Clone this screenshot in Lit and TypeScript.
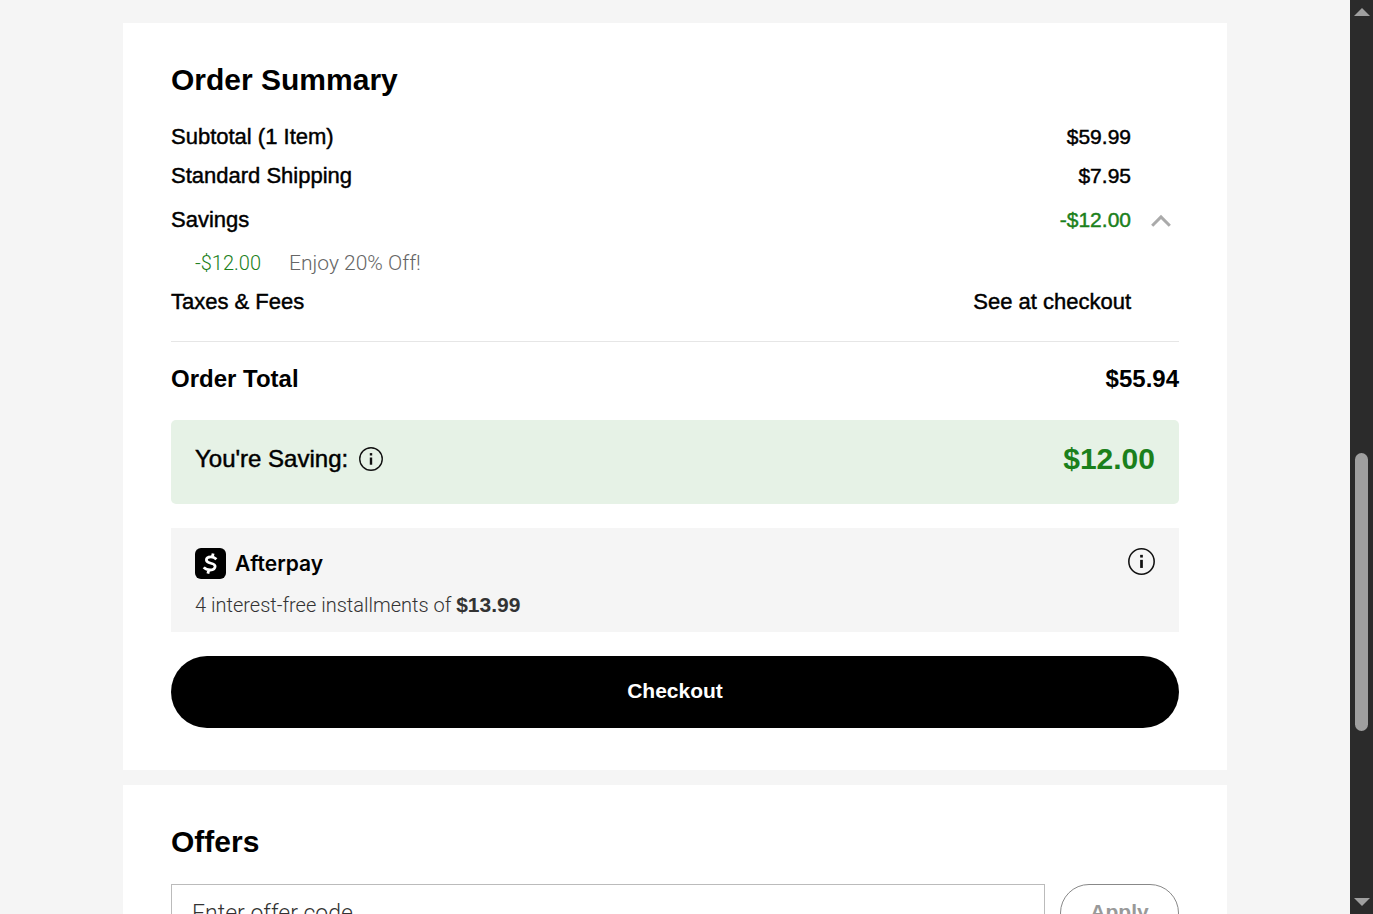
import { LitElement, html, css, svg } from "lit";
import { customElement, state } from "lit/decorators.js";

const infoGlyph = (size: number) => html`
  <svg width=${size} height=${size} viewBox="0 0 26 26" aria-hidden="true">
    ${svg`<circle cx="13" cy="13" r="12.2" fill="none" stroke="#111" stroke-width="1.5"/>
    <rect x="11.7" y="6.6" width="2.6" height="2.6" fill="#111"/>
    <rect x="11.7" y="11.4" width="2.6" height="7.8" fill="#111"/>`}
  </svg>
`;

@customElement("page-scrollbar")
class PageScrollbar extends LitElement {
  static styles = css`
    :host {
      display: flex;
      flex-direction: column;
      align-items: center;
      box-sizing: border-box;
      padding: 8px 0;
      background: #2b2b2b;
    }
    .arrow { display: block; }
    .before { flex: 437; }
    .thumb { flex: 278; width: 13px; border-radius: 7px; background: #9f9f9f; }
    .after { flex: 167; }
  `;
  render() {
    return html`
      <svg class="arrow" width="16" height="8" viewBox="0 0 16 8"><path d="M8 0 16 8H0Z" fill="#9f9f9f" /></svg>
      <div class="before"></div>
      <div class="thumb"></div>
      <div class="after"></div>
      <svg class="arrow" width="16" height="8" viewBox="0 0 16 8"><path d="M0 0H16L8 8Z" fill="#9f9f9f" /></svg>
    `;
  }
}

@customElement("app-root")
class AppRoot extends LitElement {
  @state() private open = true;

  static styles = css`
    :host {
      display: grid;
      grid-template-columns: minmax(0, 1fr) 23px;
      height: 100vh;
      overflow: hidden;
      background: #f5f5f5;
      color: #000;
      font-family: "Liberation Sans", Arial, sans-serif;
    }
    * { box-sizing: border-box; }
    button { font-family: inherit; cursor: pointer; }
    svg { display: block; flex: none; }
    .page {
      display: flex;
      flex-direction: column;
      align-items: center;
      gap: 15px;
      padding-top: 23px;
      min-height: 0;
      overflow: hidden;
    }
    .card {
      flex: none;
      width: 100%;
      max-width: 1104px;
      padding: 39px 48px 42px;
      background: #fff;
    }
    .title { margin: 0; font-size: 30px; line-height: 36px; font-weight: 700; }
    .lines { margin: 19px 0 0; padding-bottom: 20px; border-bottom: 1px solid #e6e6e6; }
    .line {
      display: grid;
      grid-template-columns: 1fr auto 48px;
      align-items: center;
      line-height: 39px;
      font-size: 22px;
      -webkit-text-stroke: 0.02em currentColor;
    }
    .line.tall { line-height: 50px; }
    .line dt, .line dd, .detail dt, .detail dd { margin: 0; }
    .amount { font-size: 21px; }
    .green { color: #1b801b; }
    .toggle { display: block; padding: 1px 0 0 20px; border: 0; background: none; }
    .toggle.closed svg { transform: rotate(180deg); }
    .detail {
      display: flex;
      gap: 28px;
      padding-left: 24px;
      font-size: 20px;
      line-height: 37px;
    }
    .light { font-family: Roboto, Inter, sans-serif; font-weight: 300; }
    .muted { color: #666; font-size: 21px; }
    .total {
      display: flex;
      justify-content: space-between;
      margin: 22px 0 26px;
      font-size: 24px;
      line-height: 30px;
      font-weight: 700;
    }
    .saving {
      display: flex;
      align-items: center;
      justify-content: space-between;
      padding: 24px 24px 30px;
      border-radius: 5px;
      background: #e6f2e6;
      line-height: 30px;
    }
    .saving-label {
      display: flex;
      align-items: center;
      gap: 11px;
      font-size: 24px;
      -webkit-text-stroke: 0.02em currentColor;
    }
    .saving-amount { font-size: 30px; font-weight: 700; }
    .icon-button { padding: 0; border: 0; background: none; }
    .afterpay { margin-top: 24px; padding: 20px 24px 12px; background: #f5f5f5; }
    .brand-row { display: flex; align-items: flex-start; justify-content: space-between; height: 31px; }
    .brand {
      display: flex;
      align-items: center;
      gap: 9px;
      font-family: Inter, sans-serif;
      font-size: 21px;
      font-weight: 600;
    }
    .terms { margin: 11px 0 0; font-size: 20px; line-height: 30px; color: #333; }
    .terms strong { font-family: "Liberation Sans", Arial, sans-serif; font-size: 21px; font-weight: 700; }
    .checkout {
      display: block;
      width: 100%;
      height: 72px;
      margin-top: 24px;
      padding: 0 0 3px;
      border: 0;
      border-radius: 36px;
      background: #000;
      color: #fff;
      font-size: 21px;
      font-weight: 700;
    }
    .offer { display: flex; gap: 15px; margin-top: 24px; }
    .code {
      flex: 1;
      min-width: 0;
      height: 58px;
      padding: 0 20px;
      border: 1px solid #bbb;
      border-radius: 0;
      background: #fff;
      font-size: 23px;
    }
    .code::placeholder { color: #333; opacity: 1; }
    .apply {
      width: 119px;
      height: 58px;
      padding: 0 0 2px;
      border: 1px solid #888;
      border-radius: 29px;
      background: #fff;
      color: #999;
      font-size: 21px;
      font-weight: 700;
    }
  `;

  render() {
    return html`
      <main class="page">
        <section class="card">
          <h2 class="title">Order Summary</h2>
          <dl class="lines">
            <div class="line"><dt>Subtotal (1 Item)</dt><dd class="amount">$59.99</dd></div>
            <div class="line"><dt>Standard Shipping</dt><dd class="amount">$7.95</dd></div>
            <div class="line tall">
              <dt>Savings</dt>
              <dd class="amount green">-$12.00</dd>
              <dd>
                <button
                  class="toggle ${this.open ? "" : "closed"}"
                  aria-label="Savings details"
                  aria-expanded=${this.open}
                  @click=${() => (this.open = !this.open)}
                >
                  <svg width="20" height="13" viewBox="0 0 20 13">
                    <path d="M1.2 11.7 10 2.9 18.8 11.7" fill="none" stroke="#aaa" stroke-width="3" />
                  </svg>
                </button>
              </dd>
            </div>
            ${this.open
              ? html`<div class="detail light"><dt class="green">-$12.00</dt><dd class="muted">Enjoy 20% Off!</dd></div>`
              : null}
            <div class="line"><dt>Taxes &amp; Fees</dt><dd>See at checkout</dd></div>
          </dl>
          <div class="total"><span>Order Total</span><span>$55.94</span></div>
          <div class="saving">
            <div class="saving-label">
              <span>You're Saving:</span>
              <button class="icon-button" aria-label="About your savings">${infoGlyph(24)}</button>
            </div>
            <span class="saving-amount green">$12.00</span>
          </div>
          <div class="afterpay">
            <div class="brand-row">
              <div class="brand">
                <svg width="31" height="31" viewBox="0 0 31 31" aria-hidden="true">
                  <rect width="31" height="31" rx="6" fill="#000" />
                  <path
                    d="M21.4 11.2C19.9 9.7 18 8.9 15.9 8.9C13.2 8.9 11.4 10.2 11.4 12.1C11.4 16.2 20.1 14.3 20.1 18.3C20.1 20.6 18 22 15.2 22C12.6 22 10.3 21.1 8.7 19.4M17.3 9.6 18.1 5.4M12.9 25.6 13.8 21.6"
                    fill="none" stroke="#fff" stroke-width="2.8" />
                </svg>
                <span>Afterpay</span>
              </div>
              <button class="icon-button" aria-label="About Afterpay">${infoGlyph(27)}</button>
            </div>
            <p class="terms light">4 interest-free installments of <strong>$13.99</strong></p>
          </div>
          <button class="checkout">Checkout</button>
        </section>
        <section class="card">
          <h2 class="title">Offers</h2>
          <form class="offer" @submit=${(e: Event) => e.preventDefault()}>
            <input class="code light" type="text" aria-label="Enter offer code" placeholder="Enter offer code" />
            <button class="apply" type="submit">Apply</button>
          </form>
        </section>
      </main>
      <page-scrollbar></page-scrollbar>
    `;
  }
}
